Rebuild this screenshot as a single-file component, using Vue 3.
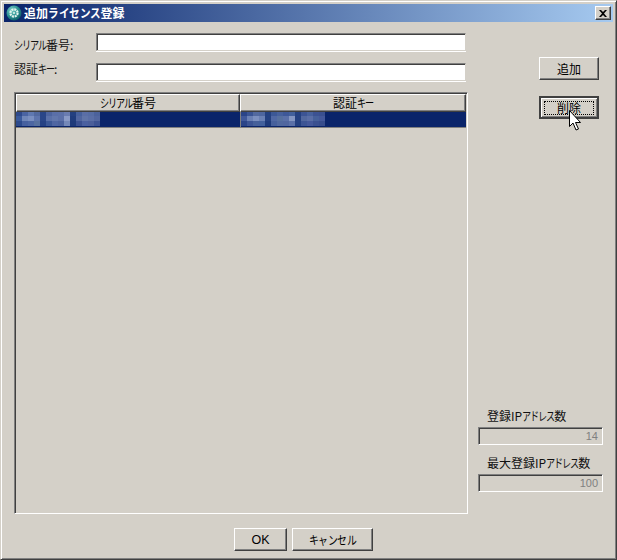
<script setup>
const seg = (text, size = 'k8') =>
  [...text].map((ch) => ({ ch, cls: /[\u30A0-\u30FF]/.test(ch) ? size : '' }))

const rowHeights = [4, 5, 5]
const blur1 = [
  ['#2f4a8c','#4a64a2','#5f78b0','#52699f','#2a4688','#4d649f','#5a6fa8','#5c70a8','#6a7cb0','#244080','#46609c','#5a6ea6','#566ca4','#4c629c'],
  ['#3a5a9c','#6f86b8','#7a8fc0','#5d74ac','#2a4688','#5a70a8','#6277ac','#5c70a8','#8a9ac6','#203c7c','#50659f','#6074a8','#5a6ea6','#52669f'],
  ['#2c4a8c','#46609f','#4c66a2','#56709f','#264284','#3c5896','#4f66a2','#4c629c','#7488b8','#1e3a7a','#3a5090','#4a60a0','#4a5e9a','#3c5292'],
]
const blur2 = [
  ['#2a4488','#3a5494','#52699f','#4e669f','#244080','#3c5896','#46609c','#3e5898','#42609c','#244080','#3c5494','#46609c','#3c5292','#3a5090'],
  ['#40589a','#6a80b4','#7c90c0','#6a80b4','#244080','#5068a4','#56709f','#5a70a8','#8496c2','#244080','#52689f','#5a6ea6','#46609a','#44589a'],
  ['#2a4488','#3c5494','#46609a','#42609c','#1e3a7a','#46609c','#50689f','#50669f','#5a70a8','#244080','#3c5494','#44589a','#3a5090','#364c8c'],
]
</script>

<template>
  <div class="window">
    <div class="titlebar">
      <svg class="appicon" width="16" height="16" viewBox="0 0 16 16">
        <defs>
          <radialGradient id="orb" cx="35%" cy="30%" r="75%">
            <stop offset="0" stop-color="#7fd0c8" />
            <stop offset=".6" stop-color="#2a8f90" />
            <stop offset="1" stop-color="#0e5a66" />
          </radialGradient>
        </defs>
        <circle cx="8" cy="8" r="7.500" fill="url(#orb)" />
        <circle cx="8" cy="8" r="3.600" fill="none" stroke="#e4f4ee" stroke-width="2.200" stroke-dasharray="2 .8" />
        <circle cx="8" cy="8" r="1" fill="#e4f4ee" />
      </svg>
      <span class="title"><span v-for="(c, i) in seg('追加ライセンス登録', 'k105')" :key="i" :class="c.cls">{{ c.ch }}</span></span>
      <button class="close" type="button" aria-label="閉じる">
        <svg width="8" height="7" viewBox="0 0 8 7">
          <path d="M0 0h2l2 2 2-2h2L5 3.500 8 7H6L4 5 2 7H0l3-3.500z" fill="#000" />
        </svg>
      </button>
    </div>

    <div class="body">
      <div class="main">
        <div class="form-row first">
          <label class="form-label"><span v-for="(c, i) in seg('シリアル番号:')" :key="i" :class="c.cls">{{ c.ch }}</span></label>
          <div class="input"></div>
        </div>
        <div class="form-row second">
          <label class="form-label"><span v-for="(c, i) in seg('認証キー:')" :key="i" :class="c.cls">{{ c.ch }}</span></label>
          <div class="input"></div>
        </div>

        <div class="table">
          <div class="thead">
            <div class="th col1"><span v-for="(c, i) in seg('シリアル番号')" :key="i" :class="c.cls">{{ c.ch }}</span></div>
            <div class="th col2"><span v-for="(c, i) in seg('認証キー')" :key="i" :class="c.cls">{{ c.ch }}</span></div>
          </div>
          <div class="selected">
            <div class="cell col1">
              <div class="mosaic">
                <div v-for="(row, r) in blur1" :key="r" class="mosaic-row">
                  <i v-for="(c, i) in row" :key="i" :style="{ background: c, height: rowHeights[r] + 'px' }"></i>
                </div>
              </div>
            </div>
            <div class="cell col2">
              <div class="mosaic">
                <div v-for="(row, r) in blur2" :key="r" class="mosaic-row">
                  <i v-for="(c, i) in row" :key="i" :style="{ background: c, height: rowHeights[r] + 'px' }"></i>
                </div>
              </div>
            </div>
          </div>
        </div>
      </div>

      <div class="side">
        <div class="actions">
          <button class="btn action" type="button">追加</button>
          <button class="btn action focused" type="button"><span class="focus-ring">削除</span></button>
          <svg class="cursor" width="13" height="23" viewBox="0 0 13 23">
            <path d="M.5.5v16l3.500-3.500 3 7 2.500-1-3-6.500h5z" fill="#fff" stroke="#000" stroke-width="1" />
          </svg>
        </div>

        <div class="stats">
          <div class="stat-label"><span v-for="(c, i) in seg('登録IPアドレス数')" :key="i" :class="c.cls">{{ c.ch }}</span></div>
          <div class="stat-field">14</div>
          <div class="stat-label second-label"><span v-for="(c, i) in seg('最大登録IPアドレス数')" :key="i" :class="c.cls">{{ c.ch }}</span></div>
          <div class="stat-field">100</div>
        </div>
      </div>
    </div>

    <div class="footer">
      <button class="btn ok" type="button">OK</button>
      <button class="btn cancel" type="button"><span v-for="(c, i) in seg('キャンセル', 'k9')" :key="i" :class="c.cls">{{ c.ch }}</span></button>
    </div>
  </div>
</template>

<style>
html, body { margin: 0; padding: 0; background: #d4d0c8; }
</style>

<style scoped>
.k8, .k9, .k105 {
  display: inline-block;
  white-space: nowrap;
  transform-origin: 0 50%;
}
.k8 { width: 8px; transform: scaleX(.76); }
.k9 { width: 9.400px; transform: scaleX(.82); }
.k105 { width: 10.500px; transform: scaleX(.88); }
.window {
  box-sizing: border-box;
  width: 617px;
  height: 560px;
  background: #d4d0c8;
  border: 1px solid;
  border-color: #d4d0c8 #404040 #404040 #d4d0c8;
  box-shadow: inset 1px 1px 0 #fff, inset -1px -1px 0 #808080;
  padding: 3px;
  display: flex;
  flex-direction: column;
  font-family: "Noto Sans CJK JP", "Liberation Sans", sans-serif;
  font-size: 12px;
  color: #000;
}
.titlebar {
  height: 18px;
  flex: none;
  display: flex;
  align-items: center;
  padding: 0 2px;
  background: linear-gradient(to right, #0a246a, #a6caf0);
}
.appicon { flex: none; }
.title {
  margin-left: 2px;
  color: #fff;
  font-weight: 700;
  font-size: 12px;
  line-height: 18px;
}
.close {
  margin-left: auto;
  box-sizing: border-box;
  width: 16px;
  height: 14px;
  padding: 0;
  display: flex;
  align-items: center;
  justify-content: center;
  background: #d4d0c8;
  border: 1px solid;
  border-color: #fff #404040 #404040 #fff;
  box-shadow: inset -1px -1px 0 #808080;
}
.body {
  flex: 1;
  display: flex;
  min-height: 0;
}
.main {
  width: 465px;
  flex: none;
  padding-left: 10px;
  box-sizing: border-box;
}
.form-row {
  display: flex;
  align-items: flex-start;
}
.form-row.first { margin-top: 11px; }
.form-row.second { margin-top: 11px; }
.form-label {
  width: 82px;
  flex: none;
  font-size: 12px;
  line-height: 14px;
  color: #111;
}
.first .form-label { margin-top: 5px; }
.second .form-label { margin-top: -1px; }
.input {
  box-sizing: border-box;
  width: 370px;
  height: 18px;
  background: #fff;
  border: 1px solid;
  border-color: #808080 #d4d0c8 #d4d0c8 #808080;
  box-shadow: inset 1px 1px 0 #404040, 0 1px 0 #fff;
}
.table {
  box-sizing: border-box;
  margin-top: 11px;
  width: 454px;
  height: 422px;
  border: 1px solid;
  border-color: #808080 #fff #fff #808080;
  box-shadow: inset 1px 1px 0 #404040;
  padding: 1px;
}
.thead {
  display: flex;
  height: 18px;
}
.th {
  box-sizing: border-box;
  height: 18px;
  text-align: center;
  font-size: 12px;
  line-height: 16px;
  border: 1px solid;
  border-color: #fff #404040 #404040 #fff;
  box-shadow: inset -1px -1px 0 #808080;
  background: #d4d0c8;
}
.col1 { width: 224px; flex: none; }
.col2 { width: 226px; flex: none; }
.selected {
  display: flex;
  height: 15px;
  background: #0a246a;
  border-bottom: 1px solid #808080;
}
.cell {
  box-sizing: border-box;
  height: 15px;
}
.cell.col2 { border-left: 1px solid #808080; }
.mosaic { display: flex; flex-direction: column; }
.mosaic-row { display: flex; }
.mosaic-row i { display: block; width: 6px; flex: none; }
.side {
  flex: 1;
  display: flex;
  flex-direction: column;
}
.actions {
  position: relative;
  margin-top: 35px;
  margin-left: 70px;
  display: flex;
  flex-direction: column;
  gap: 16px;
}
.btn {
  box-sizing: border-box;
  padding: 0;
  background: #d4d0c8;
  border: 1px solid;
  border-color: #fff #404040 #404040 #fff;
  box-shadow: inset -1px -1px 0 #808080;
  font-family: inherit;
  font-size: 12px;
  line-height: 18px;
  color: #000;
  text-align: center;
}
.action { width: 60px; height: 23px; }
.focused {
  border: 2px solid #404040;
  box-shadow: inset 1px 1px 0 #fff, inset -1px -1px 0 #808080;
  padding: 3px 3px 2px;
}
.focus-ring {
  display: block;
  box-sizing: border-box;
  height: 14px;
  line-height: 12px;
  border: 1px dotted #000;
}
.cursor {
  position: absolute;
  left: 30px;
  top: 53px;
}
.stats {
  margin-top: auto;
  margin-left: 9px;
  margin-bottom: 36px;
}
.stat-label {
  font-size: 12px;
  line-height: 16px;
  padding-left: 9px;
  color: #111;
}
.second-label { margin-top: 10px; }
.stat-field {
  box-sizing: border-box;
  width: 125px;
  height: 18px;
  margin-top: 3px;
  border: 1px solid;
  border-color: #808080 #fff #fff #808080;
  box-shadow: inset 1px 1px 0 #404040;
  text-align: right;
  padding-right: 4px;
  font-family: "Liberation Sans", sans-serif;
  font-size: 11px;
  line-height: 16px;
  color: #808080;
}
.footer {
  flex: none;
  height: 28px;
  display: flex;
  align-items: flex-start;
  padding-left: 230px;
  gap: 5px;
}
.ok { width: 53px; height: 23px; font-family: "Liberation Sans", sans-serif; font-size: 12.500px; }
.cancel { width: 81px; height: 23px; }
</style>
